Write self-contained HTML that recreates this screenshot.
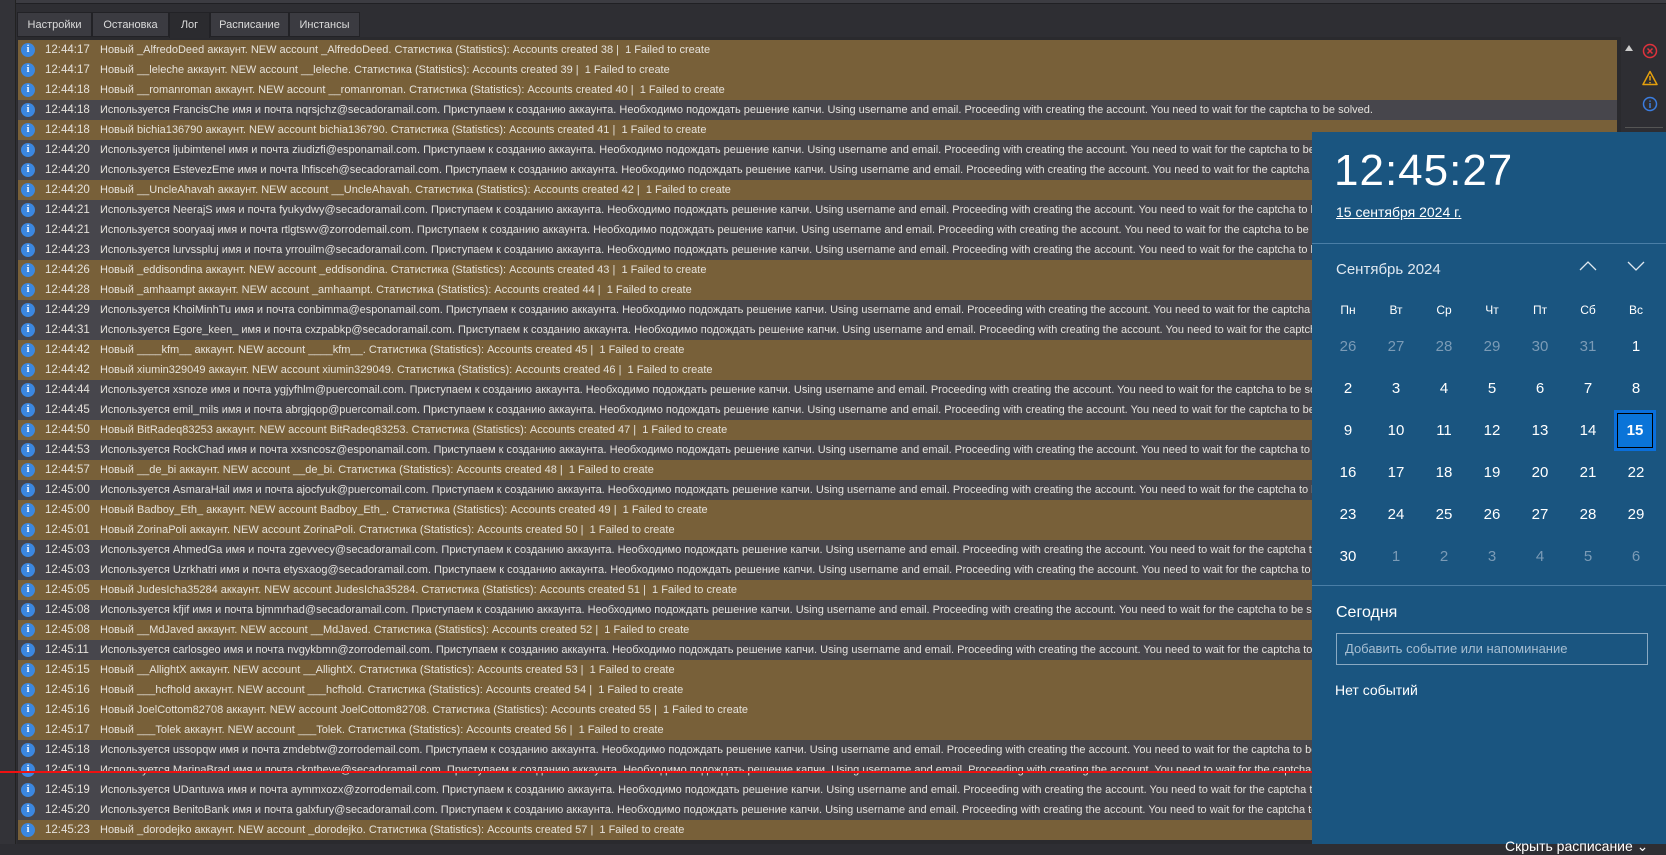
<!DOCTYPE html>
<html><head><meta charset="utf-8"><style>
*{margin:0;padding:0;box-sizing:border-box}
body{width:1666px;height:844px;overflow:hidden;background:#2e2e33;font-family:"Liberation Sans","DejaVu Sans",sans-serif;position:relative}
.topbar{position:absolute;left:16px;top:0;width:1650px;height:4px;background:#3c3c42;border-bottom:1px solid #202024}
.leftstrip{position:absolute;left:0;top:0;width:16px;height:844px;background:#333338;border-right:1px solid #222}
.tab{position:absolute;top:12px;height:25px;background:#3b3b41;border:1px solid #222226;color:#dcdcdc;font-size:11px;line-height:24px;text-align:center}
.tab.act{background:#2b2b2f;border-bottom:none;height:26px}
.panel{position:absolute;left:17px;top:37px;width:1604px;height:807px;background:#2a2a2e}
.row{position:absolute;left:18px;width:1599px;height:20px;white-space:nowrap;overflow:hidden;color:#e6e2dc;font-size:11px;line-height:20px}
.b{background:#786039}
.g{background:#47464c}
.ic{position:absolute;left:3px;top:3px;width:14px;height:14px;border-radius:50%;background:#3b87e0;color:#fff;font-weight:bold;font-size:10px;line-height:14px;text-align:center;font-family:"Liberation Serif",serif}
.t{position:absolute;left:27px;font-size:11.5px}
.m{position:absolute;left:82px}
.side{position:absolute;left:1622px;top:37px;width:44px;height:807px;background:#2e2e33}
.cal{position:absolute;left:1312px;top:132px;width:354px;height:712px;background:#1a5580;color:#fff}
.clock{position:absolute;left:22px;top:14px;font-size:44px;letter-spacing:1px}
.date{position:absolute;left:24px;top:72px;font-size:14px;text-decoration:underline}
.hr{position:absolute;left:0;width:354px;height:1px;background:#4a7ea6}
.mon{position:absolute;left:24px;top:129px;font-size:15px;color:#dfe8f0}
.dn,.d{position:absolute;width:40px;margin-left:-20px;text-align:center}
.dn{font-size:12px;top:171px}
.d{font-size:15px}
.o{color:#7b9bb6}
.sel{position:absolute;left:1614px;top:410px;width:42px;height:41px;border:3px solid #0a6fdc;background:#000}
.sel div{position:absolute;inset:1px;background:#0a74d8;color:#fff;font-weight:bold;font-size:15px;text-align:center;line-height:33px}
</style></head><body>
<div class="leftstrip"></div>
<div class="topbar"></div>
<div class="panel"></div>
<div class="tab" style="left:17px;width:75px">Настройки</div>
<div class="tab" style="left:92px;width:77px">Остановка</div>
<div class="tab act" style="left:169px;width:41px">Лог</div>
<div class="tab" style="left:210px;width:79px">Расписание</div>
<div class="tab" style="left:289px;width:71px">Инстансы</div>

<div class="row b" style="top:40px"><span class="ic">i</span><span class="t">12:44:17</span><span class="m">Новый _AlfredoDeed аккаунт. NEW account _AlfredoDeed. Статистика (Statistics): Accounts created 38 |&nbsp; 1 Failed to create</span></div>
<div class="row b" style="top:60px"><span class="ic">i</span><span class="t">12:44:17</span><span class="m">Новый __leleche аккаунт. NEW account __leleche. Статистика (Statistics): Accounts created 39 |&nbsp; 1 Failed to create</span></div>
<div class="row b" style="top:80px"><span class="ic">i</span><span class="t">12:44:18</span><span class="m">Новый __romanroman аккаунт. NEW account __romanroman. Статистика (Statistics): Accounts created 40 |&nbsp; 1 Failed to create</span></div>
<div class="row g" style="top:100px"><span class="ic">i</span><span class="t">12:44:18</span><span class="m">Используется FrancisChe имя и почта nqrsjchz@secadoramail.com. Приступаем к созданию аккаунта. Необходимо подождать решение капчи. Using username and email. Proceeding with creating the account. You need to wait for the captcha to be solved.</span></div>
<div class="row b" style="top:120px"><span class="ic">i</span><span class="t">12:44:18</span><span class="m">Новый bichia136790 аккаунт. NEW account bichia136790. Статистика (Statistics): Accounts created 41 |&nbsp; 1 Failed to create</span></div>
<div class="row g" style="top:140px"><span class="ic">i</span><span class="t">12:44:20</span><span class="m">Используется ljubimtenel имя и почта ziudizfi@esponamail.com. Приступаем к созданию аккаунта. Необходимо подождать решение капчи. Using username and email. Proceeding with creating the account. You need to wait for the captcha to be solved.</span></div>
<div class="row g" style="top:160px"><span class="ic">i</span><span class="t">12:44:20</span><span class="m">Используется EstevezEme имя и почта lhfisceh@secadoramail.com. Приступаем к созданию аккаунта. Необходимо подождать решение капчи. Using username and email. Proceeding with creating the account. You need to wait for the captcha to be solved.</span></div>
<div class="row b" style="top:180px"><span class="ic">i</span><span class="t">12:44:20</span><span class="m">Новый __UncleAhavah аккаунт. NEW account __UncleAhavah. Статистика (Statistics): Accounts created 42 |&nbsp; 1 Failed to create</span></div>
<div class="row g" style="top:200px"><span class="ic">i</span><span class="t">12:44:21</span><span class="m">Используется NeerajS имя и почта fyukydwy@secadoramail.com. Приступаем к созданию аккаунта. Необходимо подождать решение капчи. Using username and email. Proceeding with creating the account. You need to wait for the captcha to be solved.</span></div>
<div class="row g" style="top:220px"><span class="ic">i</span><span class="t">12:44:21</span><span class="m">Используется sooryaaj имя и почта rtlgtswv@zorrodemail.com. Приступаем к созданию аккаунта. Необходимо подождать решение капчи. Using username and email. Proceeding with creating the account. You need to wait for the captcha to be solved.</span></div>
<div class="row g" style="top:240px"><span class="ic">i</span><span class="t">12:44:23</span><span class="m">Используется lurvsspluj имя и почта yrrouilm@secadoramail.com. Приступаем к созданию аккаунта. Необходимо подождать решение капчи. Using username and email. Proceeding with creating the account. You need to wait for the captcha to be solved.</span></div>
<div class="row b" style="top:260px"><span class="ic">i</span><span class="t">12:44:26</span><span class="m">Новый _eddisondina аккаунт. NEW account _eddisondina. Статистика (Statistics): Accounts created 43 |&nbsp; 1 Failed to create</span></div>
<div class="row b" style="top:280px"><span class="ic">i</span><span class="t">12:44:28</span><span class="m">Новый _amhaampt аккаунт. NEW account _amhaampt. Статистика (Statistics): Accounts created 44 |&nbsp; 1 Failed to create</span></div>
<div class="row g" style="top:300px"><span class="ic">i</span><span class="t">12:44:29</span><span class="m">Используется KhoiMinhTu имя и почта conbimma@esponamail.com. Приступаем к созданию аккаунта. Необходимо подождать решение капчи. Using username and email. Proceeding with creating the account. You need to wait for the captcha to be solved.</span></div>
<div class="row g" style="top:320px"><span class="ic">i</span><span class="t">12:44:31</span><span class="m">Используется Egore_keen_ имя и почта cxzpabkp@secadoramail.com. Приступаем к созданию аккаунта. Необходимо подождать решение капчи. Using username and email. Proceeding with creating the account. You need to wait for the captcha to be solved.</span></div>
<div class="row b" style="top:340px"><span class="ic">i</span><span class="t">12:44:42</span><span class="m">Новый ____kfm__ аккаунт. NEW account ____kfm__. Статистика (Statistics): Accounts created 45 |&nbsp; 1 Failed to create</span></div>
<div class="row b" style="top:360px"><span class="ic">i</span><span class="t">12:44:42</span><span class="m">Новый xiumin329049 аккаунт. NEW account xiumin329049. Статистика (Statistics): Accounts created 46 |&nbsp; 1 Failed to create</span></div>
<div class="row g" style="top:380px"><span class="ic">i</span><span class="t">12:44:44</span><span class="m">Используется xsnoze имя и почта ygjyfhlm@puercomail.com. Приступаем к созданию аккаунта. Необходимо подождать решение капчи. Using username and email. Proceeding with creating the account. You need to wait for the captcha to be solved.</span></div>
<div class="row g" style="top:400px"><span class="ic">i</span><span class="t">12:44:45</span><span class="m">Используется emil_mils имя и почта abrgjqop@puercomail.com. Приступаем к созданию аккаунта. Необходимо подождать решение капчи. Using username and email. Proceeding with creating the account. You need to wait for the captcha to be solved.</span></div>
<div class="row b" style="top:420px"><span class="ic">i</span><span class="t">12:44:50</span><span class="m">Новый BitRadeq83253 аккаунт. NEW account BitRadeq83253. Статистика (Statistics): Accounts created 47 |&nbsp; 1 Failed to create</span></div>
<div class="row g" style="top:440px"><span class="ic">i</span><span class="t">12:44:53</span><span class="m">Используется RockChad имя и почта xxsncosz@esponamail.com. Приступаем к созданию аккаунта. Необходимо подождать решение капчи. Using username and email. Proceeding with creating the account. You need to wait for the captcha to be solved.</span></div>
<div class="row b" style="top:460px"><span class="ic">i</span><span class="t">12:44:57</span><span class="m">Новый __de_bi аккаунт. NEW account __de_bi. Статистика (Statistics): Accounts created 48 |&nbsp; 1 Failed to create</span></div>
<div class="row g" style="top:480px"><span class="ic">i</span><span class="t">12:45:00</span><span class="m">Используется AsmaraHail имя и почта ajocfyuk@puercomail.com. Приступаем к созданию аккаунта. Необходимо подождать решение капчи. Using username and email. Proceeding with creating the account. You need to wait for the captcha to be solved.</span></div>
<div class="row b" style="top:500px"><span class="ic">i</span><span class="t">12:45:00</span><span class="m">Новый Badboy_Eth_ аккаунт. NEW account Badboy_Eth_. Статистика (Statistics): Accounts created 49 |&nbsp; 1 Failed to create</span></div>
<div class="row b" style="top:520px"><span class="ic">i</span><span class="t">12:45:01</span><span class="m">Новый ZorinaPoli аккаунт. NEW account ZorinaPoli. Статистика (Statistics): Accounts created 50 |&nbsp; 1 Failed to create</span></div>
<div class="row g" style="top:540px"><span class="ic">i</span><span class="t">12:45:03</span><span class="m">Используется AhmedGa имя и почта zgevvecy@secadoramail.com. Приступаем к созданию аккаунта. Необходимо подождать решение капчи. Using username and email. Proceeding with creating the account. You need to wait for the captcha to be solved.</span></div>
<div class="row g" style="top:560px"><span class="ic">i</span><span class="t">12:45:03</span><span class="m">Используется Uzrkhatri имя и почта etysxaog@secadoramail.com. Приступаем к созданию аккаунта. Необходимо подождать решение капчи. Using username and email. Proceeding with creating the account. You need to wait for the captcha to be solved.</span></div>
<div class="row b" style="top:580px"><span class="ic">i</span><span class="t">12:45:05</span><span class="m">Новый JudesIcha35284 аккаунт. NEW account JudesIcha35284. Статистика (Statistics): Accounts created 51 |&nbsp; 1 Failed to create</span></div>
<div class="row g" style="top:600px"><span class="ic">i</span><span class="t">12:45:08</span><span class="m">Используется kfjif имя и почта bjmmrhad@secadoramail.com. Приступаем к созданию аккаунта. Необходимо подождать решение капчи. Using username and email. Proceeding with creating the account. You need to wait for the captcha to be solved.</span></div>
<div class="row b" style="top:620px"><span class="ic">i</span><span class="t">12:45:08</span><span class="m">Новый __MdJaved аккаунт. NEW account __MdJaved. Статистика (Statistics): Accounts created 52 |&nbsp; 1 Failed to create</span></div>
<div class="row g" style="top:640px"><span class="ic">i</span><span class="t">12:45:11</span><span class="m">Используется carlosgeo имя и почта nvgykbmn@zorrodemail.com. Приступаем к созданию аккаунта. Необходимо подождать решение капчи. Using username and email. Proceeding with creating the account. You need to wait for the captcha to be solved.</span></div>
<div class="row b" style="top:660px"><span class="ic">i</span><span class="t">12:45:15</span><span class="m">Новый __AllightX аккаунт. NEW account __AllightX. Статистика (Statistics): Accounts created 53 |&nbsp; 1 Failed to create</span></div>
<div class="row b" style="top:680px"><span class="ic">i</span><span class="t">12:45:16</span><span class="m">Новый ___hcfhold аккаунт. NEW account ___hcfhold. Статистика (Statistics): Accounts created 54 |&nbsp; 1 Failed to create</span></div>
<div class="row b" style="top:700px"><span class="ic">i</span><span class="t">12:45:16</span><span class="m">Новый JoelCottom82708 аккаунт. NEW account JoelCottom82708. Статистика (Statistics): Accounts created 55 |&nbsp; 1 Failed to create</span></div>
<div class="row b" style="top:720px"><span class="ic">i</span><span class="t">12:45:17</span><span class="m">Новый ___Tolek аккаунт. NEW account ___Tolek. Статистика (Statistics): Accounts created 56 |&nbsp; 1 Failed to create</span></div>
<div class="row g" style="top:740px"><span class="ic">i</span><span class="t">12:45:18</span><span class="m">Используется ussopqw имя и почта zmdebtw@zorrodemail.com. Приступаем к созданию аккаунта. Необходимо подождать решение капчи. Using username and email. Proceeding with creating the account. You need to wait for the captcha to be solved.</span></div>
<div class="row g" style="top:760px"><span class="ic">i</span><span class="t">12:45:19</span><span class="m">Используется MarinaBrad имя и почта ckntheve@secadoramail.com. Приступаем к созданию аккаунта. Необходимо подождать решение капчи. Using username and email. Proceeding with creating the account. You need to wait for the captcha to be solved.</span></div>
<div class="row g" style="top:780px"><span class="ic">i</span><span class="t">12:45:19</span><span class="m">Используется UDantuwa имя и почта aymmxozx@zorrodemail.com. Приступаем к созданию аккаунта. Необходимо подождать решение капчи. Using username and email. Proceeding with creating the account. You need to wait for the captcha to be solved.</span></div>
<div class="row g" style="top:800px"><span class="ic">i</span><span class="t">12:45:20</span><span class="m">Используется BenitoBank имя и почта galxfury@secadoramail.com. Приступаем к созданию аккаунта. Необходимо подождать решение капчи. Using username and email. Proceeding with creating the account. You need to wait for the captcha to be solved.</span></div>
<div class="row b" style="top:820px"><span class="ic">i</span><span class="t">12:45:23</span><span class="m">Новый _dorodejko аккаунт. NEW account _dorodejko. Статистика (Statistics): Accounts created 57 |&nbsp; 1 Failed to create</span></div>

<div style="position:absolute;left:0;top:771px;width:1312px;height:2px;background:#ee1111"></div>

<div class="side">
<div style="position:absolute;left:3px;top:8px;width:0;height:0;border-left:4px solid transparent;border-right:4px solid transparent;border-bottom:6px solid #ccc"></div>
<svg style="position:absolute;left:20px;top:6px" width="16" height="16" viewBox="0 0 16 16"><circle cx="8" cy="8" r="6.5" fill="none" stroke="#e0323c" stroke-width="1.5"/><path d="M5.5 5.5l5 5M10.5 5.5l-5 5" stroke="#e0323c" stroke-width="1.5"/></svg>
<svg style="position:absolute;left:20px;top:33px" width="16" height="16" viewBox="0 0 16 16"><path d="M8 1.5L15 14.5H1Z" fill="none" stroke="#e5a00d" stroke-width="1.5" stroke-linejoin="round"/><path d="M8 6v4.5M8 12v1.2" stroke="#e5a00d" stroke-width="1.5"/></svg>
<svg style="position:absolute;left:20px;top:59px" width="16" height="16" viewBox="0 0 16 16"><circle cx="8" cy="8" r="6.5" fill="none" stroke="#3b7de0" stroke-width="1.5"/><path d="M8 7v5M8 4.5v1.3" stroke="#3b7de0" stroke-width="1.5"/></svg>
<div style="position:absolute;left:3px;top:90px;width:38px;height:1px;background:#555"></div>
</div>

<div class="cal">
<div class="clock">12:45:27</div>
<div class="date">15 сентября 2024 г.</div>
<div class="hr" style="top:111px"></div>
<div class="mon">Сентябрь 2024</div>
<svg style="position:absolute;left:266px;top:128px" width="20" height="12" viewBox="0 0 20 12"><path d="M2 10L10 2L18 10" fill="none" stroke="#dfe8f0" stroke-width="1.3"/></svg>
<svg style="position:absolute;left:314px;top:128px" width="20" height="12" viewBox="0 0 20 12"><path d="M2 2L10 10L18 2" fill="none" stroke="#dfe8f0" stroke-width="1.3"/></svg>
<div class="dn" style="left:36px">Пн</div><div class="dn" style="left:84px">Вт</div><div class="dn" style="left:132px">Ср</div><div class="dn" style="left:180px">Чт</div><div class="dn" style="left:228px">Пт</div><div class="dn" style="left:276px">Сб</div><div class="dn" style="left:324px">Вс</div>

<div class="d o" style="left:36px;top:206px">26</div><div class="d o" style="left:84px;top:206px">27</div><div class="d o" style="left:132px;top:206px">28</div><div class="d o" style="left:180px;top:206px">29</div><div class="d o" style="left:228px;top:206px">30</div><div class="d o" style="left:276px;top:206px">31</div><div class="d" style="left:324px;top:206px">1</div>
<div class="d" style="left:36px;top:248px">2</div><div class="d" style="left:84px;top:248px">3</div><div class="d" style="left:132px;top:248px">4</div><div class="d" style="left:180px;top:248px">5</div><div class="d" style="left:228px;top:248px">6</div><div class="d" style="left:276px;top:248px">7</div><div class="d" style="left:324px;top:248px">8</div>
<div class="d" style="left:36px;top:290px">9</div><div class="d" style="left:84px;top:290px">10</div><div class="d" style="left:132px;top:290px">11</div><div class="d" style="left:180px;top:290px">12</div><div class="d" style="left:228px;top:290px">13</div><div class="d" style="left:276px;top:290px">14</div>
<div class="d" style="left:36px;top:332px">16</div><div class="d" style="left:84px;top:332px">17</div><div class="d" style="left:132px;top:332px">18</div><div class="d" style="left:180px;top:332px">19</div><div class="d" style="left:228px;top:332px">20</div><div class="d" style="left:276px;top:332px">21</div><div class="d" style="left:324px;top:332px">22</div>
<div class="d" style="left:36px;top:374px">23</div><div class="d" style="left:84px;top:374px">24</div><div class="d" style="left:132px;top:374px">25</div><div class="d" style="left:180px;top:374px">26</div><div class="d" style="left:228px;top:374px">27</div><div class="d" style="left:276px;top:374px">28</div><div class="d" style="left:324px;top:374px">29</div>
<div class="d" style="left:36px;top:416px">30</div><div class="d o" style="left:84px;top:416px">1</div><div class="d o" style="left:132px;top:416px">2</div><div class="d o" style="left:180px;top:416px">3</div><div class="d o" style="left:228px;top:416px">4</div><div class="d o" style="left:276px;top:416px">5</div><div class="d o" style="left:324px;top:416px">6</div>

<div class="hr" style="top:453px"></div>
<div style="position:absolute;left:24px;top:472px;font-size:16px">Сегодня</div>
<div style="position:absolute;left:24px;top:501px;width:312px;height:32px;border:1px solid #8aa9c2;color:#a8bfd2;font-size:13px;line-height:30px;padding-left:8px">Добавить событие или напоминание</div>
<div style="position:absolute;left:23px;top:550px;font-size:14px">Нет событий</div>
<div style="position:absolute;left:193px;top:706px;font-size:14px">Скрыть расписание ⌄</div>
</div>
<div class="sel"><div>15</div></div>
</body></html>
